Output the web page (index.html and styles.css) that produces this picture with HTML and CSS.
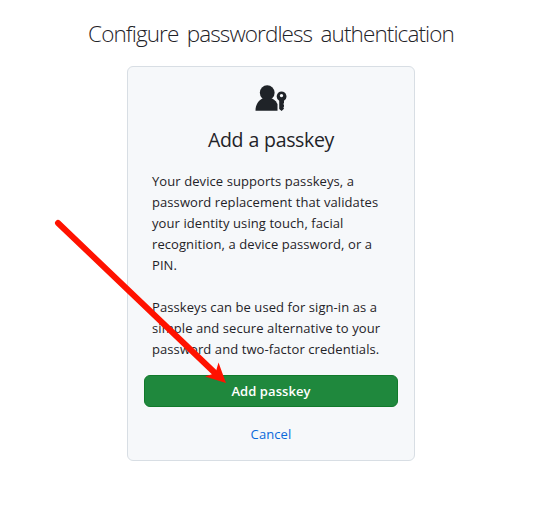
FILE: index.html
```html
<!DOCTYPE html>
<html lang="en">
<head>
<meta charset="utf-8">
<title>Configure passwordless authentication</title>
<link rel="stylesheet" href="styles.css">
</head>
<body>
<main class="page">
  <h1 class="title">Configure passwordless authentication</h1>
  <section class="card">
    <svg class="icon" viewBox="0 0 32 26" width="32" height="26" aria-hidden="true">
      <circle cx="12.200" cy="7.700" r="7.400" fill="#1f2328"/>
      <path fill="#1f2328" d="M.5 25.700C.5 19.500 3.500 15.500 7.700 13.200h8.800c1.800.8 3.500 2 4.700 3.400.1 1 .6 1.700 1.300 2.300v6.800z"/>
      <path fill="#1f2328" fill-rule="evenodd" d="M26.500 6.500a5 5 0 0 1 2.500 9.300v2l-.6 1.200.6 1.200v1.200l-.6 1.200.6 1.200-2.400 2.100-2.400-2v-8.100a5 5 0 0 1 2.300-9.300zm0 2.400a1.700 1.700 0 1 0 0 3.400 1.700 1.700 0 0 0 0-3.400z"/>
    </svg>
    <h2 class="heading">Add a passkey</h2>
    <p class="text">Your device supports passkeys, a<br>password replacement that validates<br>your identity using touch, facial<br>recognition, a device password, or a<br>PIN.</p>
    <p class="text">Passkeys can be used for sign-in as a<br>simple and secure alternative to your<br>password and two-factor credentials.</p>
    <button class="button" type="button">Add passkey</button>
    <a class="cancel">Cancel</a>
  </section>
</main>
<svg class="arrow" viewBox="0 0 544 523" width="544" height="523" aria-hidden="true">
  <path d="M58 223L215 373" stroke="#ff1200" stroke-width="6" stroke-linecap="round"/>
  <path d="M226 383l-21-6.500 10.500-3.500 3-10.500z" fill="#ff1200"/>
</svg>
</body>
</html>
```
FILE: styles.css
```css
* { box-sizing: border-box; }
body {
  margin: 0;
  background: #fff;
  color: #1f2328;
  font-family: "Open Sans", "Noto Sans", sans-serif;
  font-size: 13px;
  overflow: hidden;
}
.page {
  width: 542px;
  padding-top: 16px;
  display: flex;
  flex-direction: column;
  align-items: center;
}
.title {
  margin: 0 0 14px;
  font-size: 22.5px;
  line-height: 36px;
  font-weight: 300;
  letter-spacing: -0.9px;
  word-spacing: 3.4px;
  white-space: nowrap;
}
.card {
  width: 288px;
  height: 395px;
  padding: 18px 16px;
  display: flex;
  flex-direction: column;
  background: #f6f8fa;
  border: 1px solid #d8dee4;
  border-radius: 6px;
}
.icon { align-self: center; flex: none; }
.heading {
  margin: 14px 0 16px;
  font-size: 19.5px;
  line-height: 30px;
  font-weight: 400;
  letter-spacing: -0.35px;
  word-spacing: 0.5px;
  text-align: center;
}
.text {
  margin: 0 0 21px 8px;
  line-height: 21px;
  letter-spacing: 0.08px;
  white-space: nowrap;
}
.button {
  flex: none;
  margin-top: -6px;
  height: 32px;
  padding: 0;
  border: 1px solid #117a2b;
  border-radius: 6px;
  background: #1f883d;
  color: #fff;
  font: 600 13px/21px "Open Sans", sans-serif;
  letter-spacing: 0.08px;
}
.cancel {
  margin-top: 17px;
  color: #0969da;
  line-height: 21px;
  letter-spacing: 0.1px;
  text-align: center;
}
.arrow {
  position: absolute;
  top: 0;
  left: 0;
  pointer-events: none;
}
```
